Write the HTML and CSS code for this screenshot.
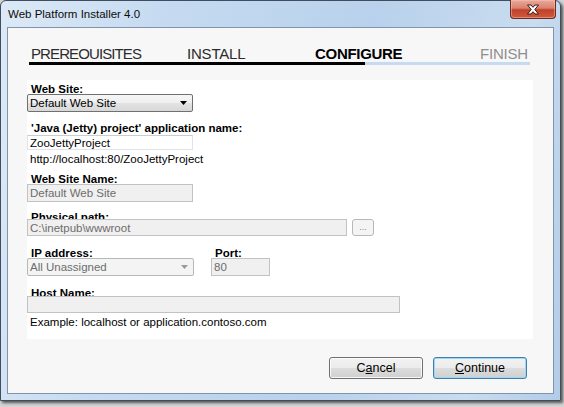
FILE: index.html
```html
<!DOCTYPE html>
<html>
<head>
<meta charset="utf-8">
<title>Web Platform Installer 4.0</title>
<link rel="stylesheet" href="styles.css">
</head>
<body>
<div class="window">
  <div class="titlebar">
    <span class="title">Web Platform Installer 4.0</span>
    <div class="close">
      <svg width="14" height="11" viewBox="0 0 14 11">
        <path d="M1.5 1 H5 L7 3.3 L9 1 H12.5 L8.8 5.5 L12.5 10 H9 L7 7.7 L5 10 H1.5 L5.2 5.5 Z" fill="#ffffff" stroke="#3b1a14" stroke-width="1" stroke-linejoin="round"/>
      </svg>
    </div>
  </div>
  <div class="client">
    <div class="tabs">
      <span class="tab done first">PREREOUISITES</span>
      <span class="tab done">INSTALL</span>
      <span class="tab current">CONFIGURE</span>
      <span class="tab todo">FINISH</span>
    </div>
    <div class="progress"></div>
    <div class="panel">
      <div class="label">Web Site:</div>
      <div class="combo w166 c-site">
        <span class="val">Default Web Site</span>
        <svg class="arrow" width="7" height="4" viewBox="0 0 7 4"><path d="M0 0 H7 L3.5 4 Z" fill="#000"/></svg>
      </div>

      <div class="label l-app">'Java (Jetty) project' application name:</div>
      <div class="textbox w166 t-app"><span class="val">ZooJettyProject</span></div>
      <div class="text t-url">http://localhost:80/ZooJettyProject</div>

      <div class="label l-wsn">Web Site Name:</div>
      <div class="textbox disabled w166 t-wsn"><span class="val">Default Web Site</span></div>

      <div class="label l-path">Physical path:</div>
      <div class="pathrow">
        <div class="textbox disabled t-path"><span class="val">C:\inetpub\wwwroot</span></div>
        <div class="browse">...</div>
      </div>

      <div class="iprow">
        <div class="col">
          <div class="label">IP address:</div>
          <div class="combo disabled c-ip">
            <span class="val">All Unassigned</span>
            <svg class="arrow" width="7" height="4" viewBox="0 0 7 4"><path d="M0 0 H7 L3.5 4 Z" fill="#9a9a9a"/></svg>
          </div>
        </div>
        <div class="col">
          <div class="label">Port:</div>
          <div class="textbox disabled t-port"><span class="val">80</span></div>
        </div>
      </div>

      <div class="label l-host">Host Name:</div>
      <div class="textbox disabled t-host"></div>
      <div class="text t-example">Example: localhost or application.contoso.com</div>
    </div>
    <div class="buttons">
      <div class="btn">C<u>a</u>ncel</div>
      <div class="btn default"><u>C</u>ontinue</div>
    </div>
  </div>
</div>
</body>
</html>
```

FILE: styles.css
```css
html, body {
  margin: 0;
  padding: 0;
}
body {
  width: 564px;
  height: 407px;
  overflow: hidden;
  background: #d4d4d4;
  font-family: "Liberation Sans", Arial, sans-serif;
  color: #000;
}

.window {
  width: 561px;
  height: 401px;
  box-sizing: border-box;
  border: 1px solid #3e4e60;
  border-radius: 6px 6px 0 0;
  background: linear-gradient(100deg, #dde9f6 0%, #c6dbf1 25%, #b9d1ec 60%, #c9dcf0 85%, #b3cce8 100%);
  padding: 0 6px 6px 6px;
  display: flex;
  flex-direction: column;
  box-shadow: 2px 2px 3px rgba(0, 0, 0, 0.6);
}

.titlebar {
  height: 26px;
  display: flex;
  align-items: flex-start;
}
.title {
  font-size: 11.5px;
  line-height: 13px;
  margin: 7px 0 0 1px;
  color: #0c0c0c;
}
.close {
  margin-left: auto;
  margin-right: -2px;
  margin-top: -1px;
  width: 46px;
  height: 19px;
  box-sizing: border-box;
  border: 1px solid #6b2b21;
  border-top: none;
  border-radius: 0 0 4px 4px;
  background: linear-gradient(#e9a99b 0%, #d9826f 45%, #c2402a 55%, #cf5a3c 100%);
  display: flex;
  align-items: center;
  justify-content: center;
  box-shadow: inset 0 0 0 1px rgba(255, 200, 190, 0.45);
}

.client {
  flex: 1;
  border: 1px solid #8194a9;
  background: #f7f7f7;
  display: flex;
  flex-direction: column;
}

.tabs {
  display: grid;
  grid-template-columns: 156px 128px 165px auto;
  padding: 17px 0 0 23px;
  font-size: 15px;
  line-height: 17px;
  height: 17px;
}
.tab { letter-spacing: -0.2px; white-space: nowrap; }
.tab.first { letter-spacing: -0.9px; }
.tab.done { color: #2b2b2b; }
.tab.current { color: #000; font-weight: bold; letter-spacing: -0.3px; }
.tab.todo { color: #8f8f8f; }

.progress {
  margin-left: 21px;
  width: 501px;
  height: 3px;
  background: linear-gradient(to right, #000 0, #000 336px, #c7dbf0 336px, #c7dbf0 100%);
}

.panel {
  margin: 15px 20px 0 19px;
  height: 259px;
  box-sizing: border-box;
  background: #fff;
  padding-top: 3px;
  font-size: 11.5px;
}

.label {
  font-weight: bold;
  line-height: 12px;
  height: 12px;
  padding-left: 4px;
  white-space: nowrap;
  color: #000;
}
.text {
  line-height: 12px;
  height: 12px;
  padding-left: 3px;
  color: #000;
  white-space: nowrap;
}

.w166 { width: 166px; }

.combo, .textbox {
  box-sizing: border-box;
  display: flex;
  align-items: center;
  position: relative;
  white-space: nowrap;
  overflow: hidden;
}
.val { padding-left: 2px; line-height: 12px; }

.combo {
  height: 18px;
  border: 1px solid #707070;
  border-radius: 2px;
  background: linear-gradient(#f6f6f6 0%, #efefef 50%, #e3e3e3 51%, #d8d8d8 100%);
}
.combo .arrow {
  margin-left: auto;
  margin-right: 5px;
}
.combo.disabled {
  border-color: #b5b9bc;
  background: #f4f4f4;
  color: #6d6d6d;
}

.textbox {
  border: 1px solid #e2e3ea;
  border-top-color: #c9ccd2;
  background: #fff;
}
.textbox.disabled {
  border: 1px solid #c2c2c2;
  background: #f0f0f0;
  color: #6d6d6d;
}

.c-site { margin-top: -1px; }
.l-app { margin-top: 10px; }
.t-app { margin-top: 1px; height: 15px; }
.t-url { margin-top: 3px; }
.l-wsn { margin-top: 8px; }
.t-wsn { margin-top: -1px; height: 18px; }
.l-path { margin-top: 9px; }

.pathrow {
  margin-top: -4px;
  display: flex;
  gap: 5px;
  height: 17px;
}
.t-path { width: 320px; height: 17px; }
.browse {
  width: 22px;
  height: 17px;
  box-sizing: border-box;
  border: 1px solid #b5b9bc;
  border-radius: 3px;
  background: #f4f4f4;
  color: #8a8a8a;
  font-size: 9px;
  line-height: 15px;
  text-align: center;
  position: relative;
}

.iprow {
  margin-top: 11px;
  display: grid;
  grid-template-columns: 167px 59px;
  column-gap: 17px;
}
.c-ip { margin-top: -1px; width: 167px; }
.t-port { margin-top: -1px; height: 18px; width: 59px; }

.l-host { margin-top: 11px; }
.t-host { margin-top: -3px; width: 373px; height: 17px; }
.t-example { margin-top: 3px; }

.buttons {
  margin-top: 18px;
  display: flex;
  justify-content: flex-end;
  gap: 10px;
  padding-right: 26px;
}
.btn {
  width: 94px;
  height: 22px;
  box-sizing: border-box;
  border: 1px solid #707070;
  border-radius: 3px;
  background: linear-gradient(#f2f2f2 0%, #ebebeb 50%, #dddddd 51%, #cfcfcf 100%);
  box-shadow: inset 0 0 0 1px rgba(255, 255, 255, 0.8);
  font-size: 12.5px;
  line-height: 20px;
  text-align: center;
  color: #000;
}
.btn.default {
  border-color: #3c7fb1;
  box-shadow: inset 0 0 0 1px #9fd6f6;
}
```
